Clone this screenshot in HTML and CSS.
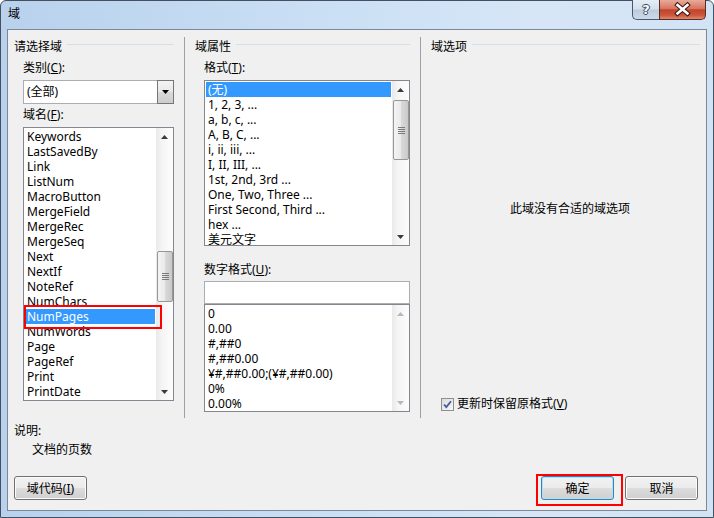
FILE: index.html
```html
<!DOCTYPE html>
<html>
<head>
    <link rel="stylesheet" href="styles.css">
</head>
<body>
    <div class="window">
        <div class="titlebar">
            <span class="title">域</span>
            <div class="caption-buttons">
                <div class="cap-btn help">?</div>
                <div class="cap-btn close">
                    <svg width="45" height="19" viewBox="0 0 45 19">
                        <path d="M17.5 5l10 8.5M27.5 5l-10 8.5" stroke="#3a1510" stroke-width="4.6" stroke-linecap="square" fill="none"/>
                        <path d="M17.5 5l10 8.5M27.5 5l-10 8.5" stroke="#ffffff" stroke-width="2.6" stroke-linecap="square" fill="none"/>
                    </svg>
                </div>
            </div>
        </div>

        <div class="client">
            <div class="panes">
                <section class="pane pane-fields">
                    <div class="group-title"><span>请选择域</span></div>
                    <div class="inset">
                        <div class="field-label">类别(<u>C</u>):</div>
                        <div class="combo">
                            <span class="combo-text">(全部)</span>
                            <span class="combo-btn">
                                <svg width="7" height="4" viewBox="0 0 7 4"><path d="M0 0h7L3.5 4z" fill="#000"/></svg>
                            </span>
                        </div>
                        <div class="field-label">域名(<u>F</u>):</div>
                        <div class="listbox names">
                            <ul class="items">
                                <li>Keywords</li>
                                <li>LastSavedBy</li>
                                <li>Link</li>
                                <li>ListNum</li>
                                <li>MacroButton</li>
                                <li>MergeField</li>
                                <li>MergeRec</li>
                                <li>MergeSeq</li>
                                <li>Next</li>
                                <li>NextIf</li>
                                <li>NoteRef</li>
                                <li>NumChars</li>
                                <li class="selected">NumPages</li>
                                <li>NumWords</li>
                                <li>Page</li>
                                <li>PageRef</li>
                                <li>Print</li>
                                <li>PrintDate</li>
                            </ul>
                            <div class="vscroll">
                                <div class="sb-arrow"><svg width="7" height="4" viewBox="0 0 7 4"><path d="M0 4h7L3.5 0z"/></svg></div>
                                <div class="sb-track"><div class="thumb"><span class="grip"></span></div></div>
                                <div class="sb-arrow"><svg width="7" height="4" viewBox="0 0 7 4"><path d="M0 0h7L3.5 4z"/></svg></div>
                            </div>
                        </div>
                    </div>
                </section>

                <section class="pane pane-props">
                    <div class="group-title"><span>域属性</span></div>
                    <div class="inset">
                        <div class="field-label">格式(<u>T</u>):</div>
                        <div class="listbox formats">
                            <ul class="items">
                                <li class="selected">(无)</li>
                                <li>1, 2, 3, ...</li>
                                <li>a, b, c, ...</li>
                                <li>A, B, C, ...</li>
                                <li>i, ii, iii, ...</li>
                                <li>I, II, III, ...</li>
                                <li>1st, 2nd, 3rd ...</li>
                                <li>One, Two, Three ...</li>
                                <li>First Second, Third ...</li>
                                <li>hex ...</li>
                                <li>美元文字</li>
                            </ul>
                            <div class="vscroll">
                                <div class="sb-arrow"><svg width="7" height="4" viewBox="0 0 7 4"><path d="M0 4h7L3.5 0z"/></svg></div>
                                <div class="sb-track"><div class="thumb"><span class="grip"></span></div></div>
                                <div class="sb-arrow"><svg width="7" height="4" viewBox="0 0 7 4"><path d="M0 0h7L3.5 4z"/></svg></div>
                            </div>
                        </div>
                        <div class="field-label spaced">数字格式(<u>U</u>):</div>
                        <div class="num-input"></div>
                        <div class="listbox numbers">
                            <ul class="items">
                                <li>0</li>
                                <li>0.00</li>
                                <li>#,##0</li>
                                <li>#,##0.00</li>
                                <li>¥#,##0.00;(¥#,##0.00)</li>
                                <li>0%</li>
                                <li>0.00%</li>
                            </ul>
                            <div class="vscroll disabled">
                                <div class="sb-arrow"><svg width="7" height="4" viewBox="0 0 7 4"><path d="M0 4h7L3.5 0z"/></svg></div>
                                <div class="sb-track"></div>
                                <div class="sb-arrow"><svg width="7" height="4" viewBox="0 0 7 4"><path d="M0 0h7L3.5 4z"/></svg></div>
                            </div>
                        </div>
                    </div>
                </section>

                <section class="pane pane-options">
                    <div class="group-title"><span>域选项</span></div>
                    <div class="no-options">此域没有合适的域选项</div>
                    <div class="keep">
                        <span class="checkbox">
                            <svg width="13" height="13" viewBox="0 0 13 13"><path d="M3 6.5l2.3 2.6L10 3.2" stroke="#3f5a9a" stroke-width="1.7" fill="none"/></svg>
                        </span>
                        <span>更新时保留原格式(<u>V</u>)</span>
                    </div>
                </section>
            </div>

            <div class="desc">
                <div>说明:</div>
                <div class="desc-text">文档的页数</div>
            </div>

            <div class="footer">
                <button class="btn">域代码(<u>I</u>)</button>
                <span class="spacer"></span>
                <button class="btn default">确定</button>
                <button class="btn">取消</button>
            </div>
        </div>

        <div class="mark mark-item"></div>
        <div class="mark mark-ok"></div>
    </div>
</body>
</html>
```

FILE: styles.css
```css
* {
    margin: 0;
    padding: 0;
    box-sizing: border-box;
}

body {
    width: 714px;
    height: 518px;
    overflow: hidden;
    font-family: "Noto Sans", "Noto Sans CJK SC", sans-serif;
    font-size: 12px;
    color: #000;
    background: #fff;
}

u {
    text-decoration: underline;
    text-underline-offset: 1px;
}

.window {
    position: relative;
    width: 714px;
    height: 518px;
    display: flex;
    flex-direction: column;
    padding: 0 6px 6px;
    border: 1px solid #44505f;
    border-radius: 6px 6px 0 0;
    background: linear-gradient(to right, #b9d1ed, #cadff4 45%, #d6e6f7 75%, #d2e3f5);
}

/* title bar */
.titlebar {
    height: 28px;
    display: flex;
    align-items: flex-start;
}

.title {
    margin: 5px 0 0 1px;
    line-height: 16px;
}

.caption-buttons {
    margin: -1px 1px 0 auto;
    display: flex;
}

.cap-btn {
    height: 20px;
    border: 1px solid #4a586a;
    border-top: none;
}

.cap-btn.help {
    width: 27px;
    border-right: none;
    border-radius: 0 0 0 5px;
    background: linear-gradient(#e4edf7, #d2dfec 48%, #bccbdc 52%, #cbdbec);
    color: #fff;
    font-family: "DejaVu Sans", sans-serif;
    font-weight: bold;
    font-size: 13px;
    line-height: 19px;
    text-align: center;
    text-shadow: 1px 0 #34455a, -1px 0 #34455a, 0 1px #34455a, 0 -1px #34455a;
}

.cap-btn.close {
    width: 47px;
    border-color: #5d2a22;
    border-radius: 0 0 5px 0;
    background: linear-gradient(#e9ab9b, #d7755f 45%, #c1432b 52%, #cc563c 80%, #dd8a70);
}

.cap-btn.close svg {
    display: block;
}

/* client area */
.client {
    flex: 1;
    display: flex;
    flex-direction: column;
    padding-top: 7px;
    background: #f0f0f0;
    border: 1px solid #7b8898;
}

.panes {
    display: grid;
    grid-template-columns: 176px 236px 1fr;
    height: 381px;
}

.pane {
    display: flex;
    flex-direction: column;
}

.pane-fields {
    padding: 0 10px 0 6px;
}

.pane-props {
    padding: 0 10px;
    border-left: 1px solid #a0a0a0;
}

.pane-options {
    padding: 0 6px 0 10px;
    border-left: 1px solid #a0a0a0;
}

.group-title {
    display: flex;
    gap: 5px;
    height: 20px;
    line-height: 20px;
    white-space: nowrap;
}

.group-title::after {
    content: "";
    flex: 1;
    height: 0;
    margin-top: 7px;
    border-top: 1px solid #d5dfe5;
}

.inset {
    padding-left: 9px;
}

.field-label {
    margin-top: 3px;
    line-height: 16px;
}

.field-label.spaced {
    margin-top: 16px;
}

/* combo box */
.combo {
    margin-top: 4px;
    height: 24px;
    display: flex;
    background: #fff;
    border: 1px solid #abadb3;
}

.combo-text {
    flex: 1;
    padding-left: 3px;
    line-height: 22px;
}

.combo-btn {
    width: 17px;
    margin: -1px -1px -1px 0;
    display: flex;
    align-items: center;
    justify-content: center;
    border: 1px solid #767676;
    background: linear-gradient(#f4f4f4, #e8e8e8 50%, #d9d9d9 50%, #cdcdcd);
}

/* list boxes */
.listbox {
    margin-top: 4px;
    display: flex;
    overflow: hidden;
    background: #fff;
    border: 1px solid #828790;
}

.names {
    height: 274px;
}

.formats {
    height: 166px;
}

.numbers {
    margin-top: 0;
    height: 108px;
}

.items {
    flex: 1;
    list-style: none;
    padding: 1px;
    overflow: hidden;
}

.items li {
    height: 15px;
    line-height: 15px;
    padding-left: 2px;
    white-space: nowrap;
}

.items li.selected {
    background: #3399ff;
    color: #fff;
}

.num-input {
    margin-top: 3px;
    height: 23px;
    background: #fff;
    border: 1px solid #abadb3;
}

/* scroll bars */
.vscroll {
    width: 17px;
    display: flex;
    flex-direction: column;
    background: linear-gradient(to right, #e9e9e9, #f5f5f5 35%, #fcfcfc);
}

.sb-arrow {
    height: 17px;
    display: flex;
    align-items: center;
    justify-content: center;
    fill: #3c3c3c;
}

.vscroll.disabled .sb-arrow {
    fill: #b8b8b8;
}

.sb-track {
    flex: 1;
}

.thumb {
    width: 16px;
    margin-left: 1px;
    display: flex;
    align-items: center;
    justify-content: center;
    border: 1px solid #979797;
    border-radius: 2px;
    background: linear-gradient(to right, #f4f4f4, #e9e9e9 50%, #dadada 50%, #c9c9c9);
}

.names .thumb {
    margin-top: 106px;
    height: 51px;
}

.formats .thumb {
    margin-top: 2px;
    height: 60px;
}

.grip {
    width: 7px;
    height: 7px;
    background: repeating-linear-gradient(#7b7b7b 0 1px, transparent 1px 2px);
}

/* options */
.no-options {
    margin-top: 144px;
    padding-left: 9px;
    text-align: center;
    line-height: 16px;
}

.keep {
    margin: auto 0 6px;
    padding-left: 10px;
    display: flex;
    align-items: center;
    gap: 3px;
    line-height: 16px;
}

.checkbox {
    width: 13px;
    height: 13px;
    border: 1px solid #8e8f8f;
    background: linear-gradient(135deg, #dcdcdc, #f6f6f6);
    display: flex;
}

.checkbox svg {
    margin: -1px;
}

/* description */
.desc {
    margin-top: 5px;
    padding-left: 6px;
    line-height: 16px;
}

.desc-text {
    margin: 3px 0 0 18px;
}

/* buttons */
.footer {
    display: flex;
    gap: 11px;
    margin-top: 18px;
    padding: 0 8px 0 6px;
}

.spacer {
    flex: 1;
}

.btn {
    width: 73px;
    height: 24px;
    font: inherit;
    color: #000;
    border: 1px solid #707070;
    border-radius: 3px;
    background: linear-gradient(#f2f2f2, #ebebeb 50%, #dddddd 50%, #cfcfcf);
    box-shadow: inset 0 0 0 1px #fbfbfb;
}

.btn.default {
    border-color: #3c7fb1;
    box-shadow: inset 0 0 0 1px #a9e4fa;
}

/* red highlight marks */
.mark {
    position: absolute;
    border: 2px solid #ff0000;
}

.mark-item {
    left: 23px;
    top: 304px;
    width: 138px;
    height: 24px;
}

.mark-ok {
    left: 535px;
    top: 473px;
    width: 87px;
    height: 32px;
}
```
